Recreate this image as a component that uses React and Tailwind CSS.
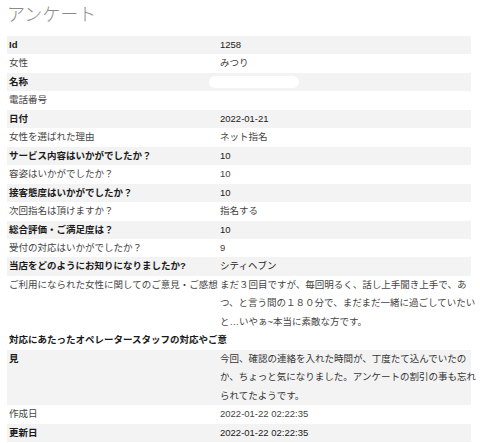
import React from "react";

const rows = [
  { l: "Id", v: "1258", b: true },
  { l: "女性", v: "みつり" },
  { l: "名称", v: "__pill__", b: true },
  { l: "電話番号", v: "" },
  { l: "日付", v: "2022-01-21", b: true },
  { l: "女性を選ばれた理由", v: "ネット指名" },
  { l: "サービス内容はいかがでしたか？", v: "10", b: true },
  { l: "容姿はいかがでしたか？", v: "10" },
  { l: "接客態度はいかがでしたか？", v: "10", b: true },
  { l: "次回指名は頂けますか？", v: "指名する" },
  { l: "総合評価・ご満足度は？", v: "10", b: true },
  { l: "受付の対応はいかがでしたか？", v: "9" },
  { l: "当店をどのようにお知りになりましたか?", v: "シティヘブン", b: true },
  {
    l: "ご利用になられた女性に関してのご意見・ご感想",
    v: [
      "まだ３回目ですが、毎回明るく、話し上手聞き上手で、あ",
      "つ、と言う間の１８０分で、まだまだ一緒に過ごしていたい",
      "と…いやぁ~本当に素敵な方です。",
    ],
  },
];

function Row({ l, v, b }) {
  const shade = b ? "bg-[#f3f3f3] text-[#1a1a1a]" : "bg-white text-[#444]";
  return (
    <div className={`grid grid-cols-[211px_1fr] ${shade}`}>
      <div className={`pl-[2px] whitespace-nowrap ${b ? "font-bold" : ""}`}>{l}</div>
      <div className="pl-[2px] whitespace-nowrap">
        {v === "__pill__" ? (
          <div className="flex h-[18.45px] items-center">
            <div className="-ml-[11px] h-[12px] w-[90px] rounded-full bg-white" />
          </div>
        ) : Array.isArray(v) ? (
          v.map((t, i) => <div key={i}>{t}</div>)
        ) : (
          v || "\u00a0"
        )}
      </div>
    </div>
  );
}

export default function App() {
  return (
    <div
      className="w-[480px] h-[443px] overflow-hidden bg-white px-[7px] pr-[9px]"
      style={{ fontFamily: '"Liberation Sans", "Noto Sans CJK JP", sans-serif' }}
    >
      <div className="h-[36px] pt-[2px] text-[18px] leading-[26px] font-light text-[#8a8a8a]">
        アンケート
      </div>
      <div className="text-[9.5px] leading-[18.45px]">
        {rows.map((r, i) => (
          <Row key={i} {...r} />
        ))}
        <div className="bg-white pl-[2px] font-bold whitespace-nowrap text-[#1a1a1a]">
          対応にあたったオペレータースタッフの対応やご意
        </div>
        <div className="grid grid-cols-[211px_1fr] bg-[#f3f3f3] text-[#1a1a1a]">
          <div className="pl-[2px] font-bold">見</div>
          <div className="pl-[2px] whitespace-nowrap text-[#333]">
            <div>今回、確認の連絡を入れた時間が、丁度たて込んでいたの</div>
            <div>か、ちょっと気になりました。アンケートの割引の事も忘れ</div>
            <div>られてたようです。</div>
          </div>
        </div>
        <Row l="作成日" v="2022-01-22 02:22:35" />
        <Row l="更新日" v="2022-01-22 02:22:35" b />
      </div>
    </div>
  );
}
